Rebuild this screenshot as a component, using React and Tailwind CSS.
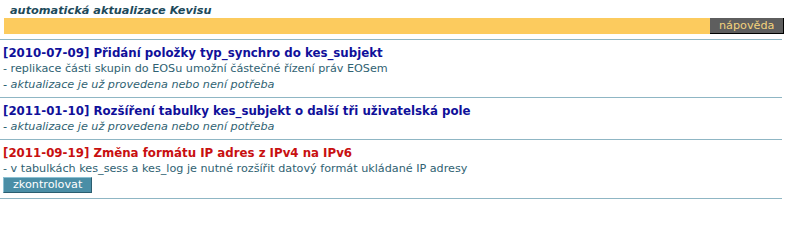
import React from 'react';

const entries = [
  {
    date: '2010-07-09',
    title: 'Přidání položky typ_synchro do kes_subjekt',
    lines: ['replikace části skupin do EOSu umožní částečné řízení práv EOSem'],
    done: true,
  },
  {
    date: '2011-01-10',
    title: 'Rozšíření tabulky kes_subjekt o další tři uživatelská pole',
    lines: [],
    done: true,
  },
  {
    date: '2011-09-19',
    title: 'Změna formátu IP adres z IPv4 na IPv6',
    lines: ['v tabulkách kes_sess a kes_log je nutné rozšířit datový formát ukládané IP adresy'],
    done: false,
  },
];

export default function App() {
  return (
    <div className="w-[787px] h-[202px] overflow-hidden bg-white text-[11.2px] leading-[15px] font-['DejaVu_Sans',Verdana,sans-serif]">
      {/* Header */}
      <div className="pt-[3px] pl-[10px] text-[11.3px] font-bold italic text-[#1d4a5a]">automatická aktualizace Kevisu</div>
      <div className="ml-[4px] mr-[3px] h-[16px] bg-[#fccb5e] flex justify-end">
        <button className="w-[74px] h-[16px] bg-[#5e5e5e] text-[#f3d27c] text-left pl-[9px] border-r border-b border-black leading-[15px]">
          nápověda
        </button>
      </div>

      {/* Entries */}
      <div className="mt-[5px] w-[782px]">
        {entries.map((e) => (
          <div key={e.date} className="border-t border-[#8fb6c4] pl-[3px] pt-[6px] pb-[5px]">
            <div className={`text-[11.8px] font-bold ${e.done ? 'text-[#10109a]' : 'text-[#c81010]'}`}>
              [{e.date}] {e.title}
            </div>
            {e.lines.map((l) => (
              <div key={l} className="leading-[16px] text-[#2f6272]">- {l}</div>
            ))}
            {e.done ? (
              <div className="italic text-[#2f6272]">- aktualizace je už provedena nebo není potřeba</div>
            ) : (
              <button className="w-[89px] h-[16px] bg-[#4a8ea6] text-white text-left pl-[9px] border border-t-[#8cc0d2] border-l-[#8cc0d2] border-r-[#2b5e70] border-b-[#2b5e70] leading-[14px]">
                zkontrolovat
              </button>
            )}
          </div>
        ))}
        <div className="border-t border-[#8fb6c4]" />
      </div>
    </div>
  );
}
